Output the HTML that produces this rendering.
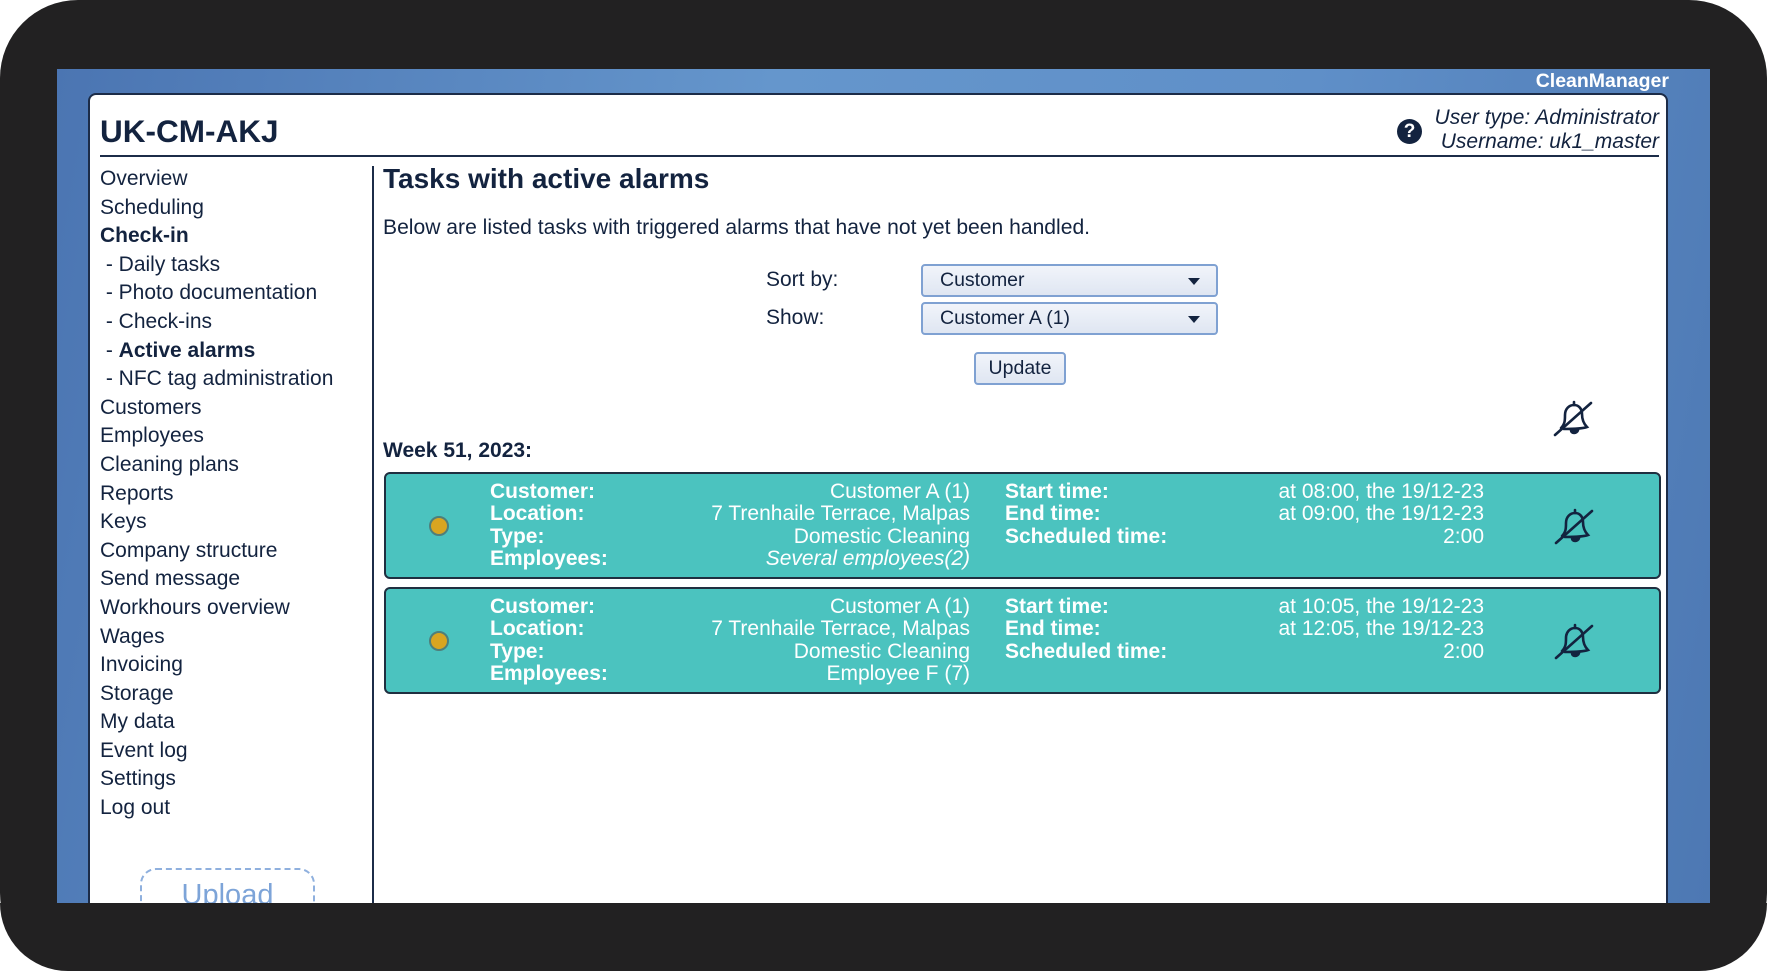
<!DOCTYPE html>
<html><head><meta charset="utf-8"><style>
*{margin:0;padding:0;box-sizing:border-box}
body{width:1767px;height:971px;background:#fff;position:relative;overflow:hidden;font-family:"Liberation Sans",sans-serif;color:#13233f}
.frame{position:absolute;left:0;top:0;width:1767px;height:971px;background:#222122;border-radius:78px}
.blue{position:absolute;left:57px;top:69px;width:1653px;height:834px;background:linear-gradient(100deg,#4b75b2 0%,#6596cc 40%,#5f8fc8 70%,#4d78b3 100%)}
.cm{position:absolute;top:70px;color:#fff;font-weight:bold;font-size:19.5px}
.panel{position:absolute;left:88px;top:93px;width:1580px;height:810px;background:#fff;border:2px solid #1c2c48;border-bottom:none;border-radius:8px 8px 0 0}
.abs{position:absolute}
.title{left:100px;top:113px;font-size:31.5px;font-weight:bold}
.hline{left:100px;top:155px;width:1559px;height:2px;background:#1c2c48}
.user{right:108px;top:106px;text-align:right;font-style:italic;font-size:21px;line-height:24px}
.help{left:1397px;top:119px;width:25px;height:25px;border-radius:50%;background:#13233f;color:#fff;font-weight:bold;font-size:19px;text-align:center;line-height:25px}
.nav{left:100px;top:165px;font-size:21px;line-height:28.6px}
.nav b{font-weight:bold}
.vline{left:372px;top:166px;width:2px;height:740px;background:#1c2c48}
.h2{left:383px;top:163px;font-size:28px;font-weight:bold}
.desc{left:383px;top:216px;font-size:21.1px}
.lbl{font-size:21px}
.sel{width:297px;height:33px;border:2px solid #7fa1d2;border-radius:4px;background:linear-gradient(#f1f4fa,#dfe6f2);font-size:19.5px;padding-left:17px;line-height:29px}
.sel:after{content:"";position:absolute;right:16px;top:12px;border:6px solid transparent;border-top:7px solid #13233f}
.btn{left:974px;top:352px;width:92px;height:33px;border:2px solid #7fa1d2;border-radius:4px;background:linear-gradient(#f1f4fa,#dfe6f2);font-size:19.5px;text-align:center;line-height:29px}
.week{left:383px;top:439px;font-size:21px;font-weight:bold}
.card{position:absolute;left:384px;width:1277px;height:107px;background:#4bc3bf;border:2px solid #1f2f40;border-radius:6px;color:#fff;font-size:21px;line-height:22.4px}
.dot{position:absolute;left:43px;top:42px;width:20px;height:20px;border-radius:50%;background:#d9a521;border:2px solid #4f7f7a}
.col{position:absolute;top:7px;white-space:nowrap}
.col b{font-weight:bold}
.r{text-align:right}
.upload{left:140px;top:868px;width:175px;height:60px;border:2px dashed #8fb0de;border-radius:16px;color:#7da4d8;font-size:29px;text-align:center;padding-top:9px}
.cover{position:absolute;left:0;top:903px;width:1767px;height:68px;background:#222122}
</style></head><body>
<div class="frame"></div>
<div class="blue"></div>
<div class="cm abs" style="right:98px">CleanManager</div>
<div class="panel"></div>
<div class="abs title">UK-CM-AKJ</div>
<div class="abs help">?</div>
<div class="abs user">User type: Administrator<br>Username: uk1_master</div>
<div class="abs hline"></div>
<div class="abs nav">Overview<br>Scheduling<br><b>Check-in</b><br>&nbsp;- Daily tasks<br>&nbsp;- Photo documentation<br>&nbsp;- Check-ins<br>&nbsp;- <b>Active alarms</b><br>&nbsp;- NFC tag administration<br>Customers<br>Employees<br>Cleaning plans<br>Reports<br>Keys<br>Company structure<br>Send message<br>Workhours overview<br>Wages<br>Invoicing<br>Storage<br>My data<br>Event log<br>Settings<br>Log out</div>
<div class="abs vline"></div>
<div class="abs h2">Tasks with active alarms</div>
<div class="abs desc">Below are listed tasks with triggered alarms that have not yet been handled.</div>
<div class="abs lbl" style="left:766px;top:268px">Sort by:</div>
<div class="abs sel" style="left:921px;top:264px">Customer</div>
<div class="abs lbl" style="left:766px;top:306px">Show:</div>
<div class="abs sel" style="left:921px;top:302px">Customer A (1)</div>
<div class="abs btn">Update</div>
<svg class="abs" style="left:1551px;top:398px" width="44" height="40" viewBox="0 0 44 40" fill="none" stroke="#13233f" stroke-width="2.6" stroke-linecap="round"><path d="M10 30 C14 26 14 22 14 17 C14 11 18 7 23 7 C28 7 31 11 31 16 C31 22 33 26 36 29 C31 31 20 31 13 31"/><path d="M23 4v3"/><path d="M20 32 C20 36 26 36 27 32" fill="#13233f"/><path d="M4 37 L40 5"/></svg>
<div class="abs week">Week 51, 2023:</div>

<div class="card" style="top:472px"><div class="dot"></div>
<div class="col" style="left:104px"><b>Customer:<br>Location:<br>Type:<br>Employees:</b></div>
<div class="col r" style="right:689px">Customer A (1)<br>7 Trenhaile Terrace, Malpas<br>Domestic Cleaning<br><i>Several employees(2)</i></div>
<div class="col" style="left:619px"><b>Start time:<br>End time:<br>Scheduled time:</b></div>
<div class="col r" style="right:175px">at 08:00, the 19/12-23<br>at 09:00, the 19/12-23<br>2:00</div>
<svg style="position:absolute;left:1166px;top:32px" width="44" height="40" viewBox="0 0 44 40" fill="none" stroke="#13233f" stroke-width="2.6" stroke-linecap="round"><path d="M10 30 C14 26 14 22 14 17 C14 11 18 7 23 7 C28 7 31 11 31 16 C31 22 33 26 36 29 C31 31 20 31 13 31"/><path d="M23 4v3"/><path d="M20 32 C20 36 26 36 27 32" fill="#13233f"/><path d="M4 37 L40 5"/></svg>
</div>

<div class="card" style="top:587px"><div class="dot"></div>
<div class="col" style="left:104px"><b>Customer:<br>Location:<br>Type:<br>Employees:</b></div>
<div class="col r" style="right:689px">Customer A (1)<br>7 Trenhaile Terrace, Malpas<br>Domestic Cleaning<br>Employee F (7)</div>
<div class="col" style="left:619px"><b>Start time:<br>End time:<br>Scheduled time:</b></div>
<div class="col r" style="right:175px">at 10:05, the 19/12-23<br>at 12:05, the 19/12-23<br>2:00</div>
<svg style="position:absolute;left:1166px;top:32px" width="44" height="40" viewBox="0 0 44 40" fill="none" stroke="#13233f" stroke-width="2.6" stroke-linecap="round"><path d="M10 30 C14 26 14 22 14 17 C14 11 18 7 23 7 C28 7 31 11 31 16 C31 22 33 26 36 29 C31 31 20 31 13 31"/><path d="M23 4v3"/><path d="M20 32 C20 36 26 36 27 32" fill="#13233f"/><path d="M4 37 L40 5"/></svg>
</div>

<div class="abs upload">Upload</div>
<div class="cover" style="border-radius:0 0 78px 78px"></div>
</body></html>
